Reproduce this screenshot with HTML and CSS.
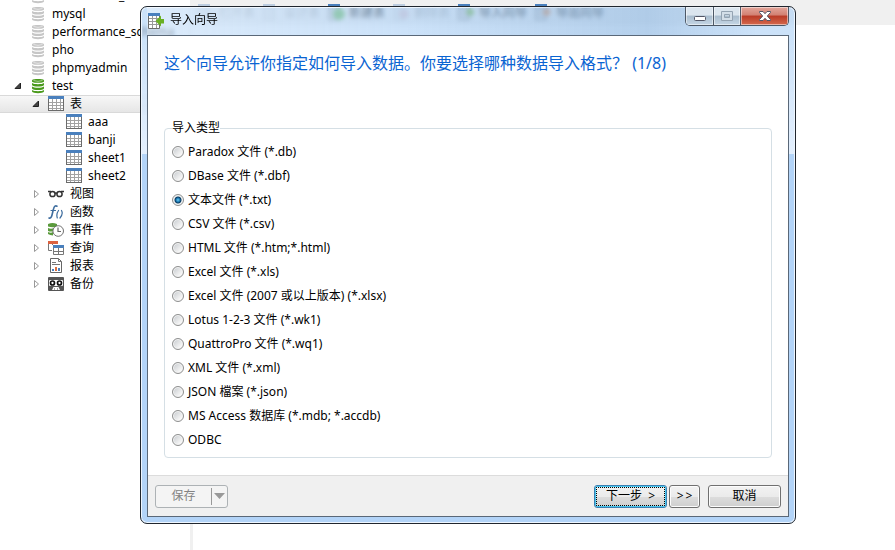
FILE: index.html
```html
<!DOCTYPE html>
<html lang="zh-CN">

<head>
    <meta charset="UTF-8">
    <meta name="viewport" content="width=device-width, initial-scale=1">
    <title>导入向导</title>
    <link rel="stylesheet" href="styles.css">
</head>

<body>
    <!-- shared icons -->
    <svg class="defs" width="0" height="0" aria-hidden="true">
        <symbol id="db" viewBox="0 0 16 16">
            <path d="M2 2.500C2 .6 14 .6 14 2.500V3.500C14 5.300 2 5.300 2 3.500Z" fill="currentColor"/>
            <path d="M2 5C4 6.600 12 6.600 14 5V7C13 9 3 9 2 7ZM2 8.500C4 10.200 12 10.200 14 8.500V10.500C13 12.500 3 12.500 2 10.500ZM2 12C4 13.600 12 13.600 14 12V13.600C13 15.800 3 15.800 2 13.600Z" fill="currentColor"/>
            <path d="M3.500 2.500Q8 4.200 12.500 2.500" fill="none" stroke="#fff" stroke-opacity=".5"/>
        </symbol>
        <symbol id="table" viewBox="0 0 16 16">
            <path d="M0 0H16V15H0Z" fill="#6b6b6b"/>
            <path d="M0 0H16V3H0Z" fill="#4a80bd"/>
            <path d="M1 3H15V14H1Z" fill="#fff"/>
            <path d="M1 6.500H15M1 9.500H15M1 12.500H15M4.500 3V14M8.500 3V14M12.500 3V14" stroke="#a2a2a2" fill="none"/>
        </symbol>
        <symbol id="sheet" viewBox="0 0 17 16">
            <path d="M.5 1V15.500H11.500V1" fill="#fff" stroke="#6b6b6b"/>
            <path d="M1 5.500H11M1 8.500H11M1 11.500H11M4.500 3V15M8.500 3V15" stroke="#999" fill="none"/>
            <path d="M0 0H12V3H0Z" fill="#4a80bd"/>
        </symbol>
        <symbol id="open" viewBox="0 0 8 8">
            <path d="M6.500 1V6.500H1Z" fill="#444" stroke="#222"/>
        </symbol>
        <symbol id="closed" viewBox="0 0 8 8">
            <path d="M2.500 .5L6.500 4L2.500 7.500Z" fill="#fff" stroke="#999"/>
        </symbol>
    </svg>

    <div class="app">
        <nav class="sidebar">
            <ul class="tree">
                <li class="row"><span class="toggle"></span><svg class="icon off"><use href="#db"/></svg>information_schema</li>
                <li class="row"><span class="toggle"></span><svg class="icon off"><use href="#db"/></svg>mysql</li>
                <li class="row"><span class="toggle"></span><svg class="icon off"><use href="#db"/></svg>performance_schema</li>
                <li class="row"><span class="toggle"></span><svg class="icon off"><use href="#db"/></svg>pho</li>
                <li class="row"><span class="toggle"></span><svg class="icon off"><use href="#db"/></svg>phpmyadmin</li>
                <li class="row"><span class="toggle"><svg><use href="#open"/></svg></span><svg class="icon on"><use href="#db"/></svg>test</li>
                <li class="row level2 selected"><span class="toggle"><svg><use href="#open"/></svg></span><svg class="icon"><use href="#table"/></svg>表</li>
                <li class="row level3"><span class="toggle"></span><svg class="icon"><use href="#table"/></svg>aaa</li>
                <li class="row level3"><span class="toggle"></span><svg class="icon"><use href="#table"/></svg>banji</li>
                <li class="row level3"><span class="toggle"></span><svg class="icon"><use href="#table"/></svg>sheet1</li>
                <li class="row level3"><span class="toggle"></span><svg class="icon"><use href="#table"/></svg>sheet2</li>
                <li class="row level2"><span class="toggle"><svg><use href="#closed"/></svg></span>
                    <svg class="icon" viewBox="0 0 16 16"><g fill="none" stroke="#333" stroke-width="1.500"><circle cx="4.500" cy="8" r="2.600"/><circle cx="11.500" cy="8" r="2.600"/><path d="M0 5.500H3M13 5.500H16M7 7.500Q8 6.500 9 7.500"/></g></svg>视图</li>
                <li class="row level2"><span class="toggle"><svg><use href="#closed"/></svg></span>
                    <svg class="icon" viewBox="0 0 16 16"><g fill="none" stroke="#3d6c9e" stroke-linecap="round"><path d="M1 14C4 15 4 10 5.500 5C6.300 2 7.500 1.500 9 2.200" stroke-width="1.600"/><path d="M3 6.500H7.500M10.500 6.500Q8 10 9.300 14M13.500 6.500Q15.500 10 12 14" stroke-width="1.200"/></g></svg>函数</li>
                <li class="row level2"><span class="toggle"><svg><use href="#closed"/></svg></span>
                    <svg class="icon" viewBox="0 0 16 16"><path d="M0 2Q4.500 0 9 2V4.500Q4.500 6 0 4.500ZM0 6Q3 7.300 6 6V9Q3 10 0 9ZM0 10Q3 11.300 5 10V13.500Q2 13 0 12Z" fill="#5a9a3c"/><circle cx="10.200" cy="9" r="5.300" fill="#fff" stroke="#707070"/><path d="M10 5.500V9.500H13" fill="none" stroke="#666" stroke-width="1.200"/></svg>事件</li>
                <li class="row level2"><span class="toggle"><svg><use href="#closed"/></svg></span>
                    <svg class="icon" viewBox="0 0 16 16"><path d="M.5 3V10.500H4M4.500 3V5" fill="none" stroke="#777"/><path d="M0 1H10V4H0Z" fill="#dc6240"/><path d="M5.500 6.500H15.500V14.500H5.500ZM10.500 7V14M6 11.500H15" fill="#fff" stroke="#777"/><path d="M5 5H16V8H5Z" fill="#4a80bd"/></svg>查询</li>
                <li class="row level2"><span class="toggle"><svg><use href="#closed"/></svg></span>
                    <svg class="icon" viewBox="0 0 16 16"><path d="M2.500 .5H10.500L13.500 3.500V14.500H2.500Z" fill="#fff" stroke="#666"/><path d="M10.500 .5V3.500H13.500M4 4.500H8M4 6.500H12" fill="none" stroke="#777"/><path d="M4 11H6V13H4ZM10 10H12V13H10Z" fill="#4a80bd"/><path d="M7 9H9V13H7Z" fill="#dc7040"/></svg>报表</li>
                <li class="row level2"><span class="toggle"><svg><use href="#closed"/></svg></span>
                    <svg class="icon" viewBox="0 0 16 16"><rect y="1" width="16" height="14" rx="1" fill="#555"/><rect x="1" y="4" width="14" height="6" rx="1" fill="#fff"/><circle cx="4.500" cy="7" r="2" fill="#fff" stroke="#111" stroke-width="1.700"/><circle cx="11.500" cy="7" r="2" fill="#fff" stroke="#111" stroke-width="1.700"/><path d="M4 14L5.500 11H10.500L12 14Z" fill="#fff"/><path d="M6 13H7M9 13H10" stroke="#555"/></svg>备份</li>
            </ul>
        </nav>

        <main class="workspace">
            <div class="toolbar">
                <button type="button" class="tool" disabled><svg class="tool-icon"><use href="#sheet"/></svg>打开表</button>
                <button type="button" class="tool" disabled><svg class="tool-icon"><use href="#sheet"/></svg>设计表</button>
                <button type="button" class="tool"><svg class="tool-icon"><use href="#sheet"/><circle cx="11" cy="10" r="6" fill="#5fb54a"/></svg>新建表</button>
                <button type="button" class="tool" disabled><svg class="tool-icon"><use href="#sheet"/><circle cx="11" cy="10" r="5" fill="#c06070"/></svg>删除表</button>
                <button type="button" class="tool wide"><svg class="tool-icon"><use href="#sheet"/><path d="M7.500 8L13 2.500V6H16V10.500H13V13.500Z" fill="#6ab023"/></svg>导入向导</button>
                <button type="button" class="tool wide"><svg class="tool-icon"><use href="#sheet"/><path d="M16 8L11 2.500V6H8V10.500H11V13.500Z" fill="#e07830"/></svg>导出向导</button>
            </div>
        </main>
    </div>

    <form class="dialog" role="dialog" aria-labelledby="dialog-title">
        <header class="titlebar">
            <svg class="title-icon" viewBox="0 0 17 16"><use href="#sheet"/><path d="M7.500 8L13 2.500V6H16V10.500H13V13.500Z" fill="#6ab023"/></svg>
            <span id="dialog-title" class="title">导入向导</span>
            <div class="window-buttons">
                <button type="button" class="win minimize" aria-label="最小化"><svg width="14" height="12"><rect x="1.500" y="6.500" width="11" height="4" rx="1" fill="#fff" stroke="#535666"/></svg></button>
                <button type="button" class="win maximize" aria-label="最大化" disabled><svg width="14" height="12"><path d="M1.500 1.500H12.500V10.500H1.500ZM4.500 4.500H9.500V7.500H4.500Z" fill="#d3dee8" fill-rule="evenodd" stroke="#94a3b2"/></svg></button>
                <button type="button" class="win close" aria-label="关闭"><svg width="14" height="12"><path d="M1.500 1.500H5L7 3.700L9 1.500H12.500V2.500L9.300 6L12.500 9.500V10.500H9L7 8.300L5 10.500H1.500V9.500L4.700 6L1.500 2.500Z" fill="#fff" stroke="#535666"/></svg></button>
            </div>
        </header>

        <div class="client">
            <div class="content">
                <h1>这个向导允许你指定如何导入数据。你要选择哪种数据导入格式？ (1/8)</h1>
                <fieldset class="types">
                    <legend>导入类型</legend>
                    <label><input type="radio" name="type"> Paradox 文件 (*.db)</label>
                    <label><input type="radio" name="type"> DBase 文件 (*.dbf)</label>
                    <label><input type="radio" name="type" checked> 文本文件 (*.txt)</label>
                    <label><input type="radio" name="type"> CSV 文件 (*.csv)</label>
                    <label><input type="radio" name="type"> HTML 文件 (*.htm;*.html)</label>
                    <label><input type="radio" name="type"> Excel 文件 (*.xls)</label>
                    <label><input type="radio" name="type"> Excel 文件 (2007 或以上版本) (*.xlsx)</label>
                    <label><input type="radio" name="type"> Lotus 1-2-3 文件 (*.wk1)</label>
                    <label><input type="radio" name="type"> QuattroPro 文件 (*.wq1)</label>
                    <label><input type="radio" name="type"> XML 文件 (*.xml)</label>
                    <label><input type="radio" name="type"> JSON 檔案 (*.json)</label>
                    <label><input type="radio" name="type"> MS Access 数据库 (*.mdb; *.accdb)</label>
                    <label><input type="radio" name="type"> ODBC</label>
                </fieldset>
            </div>
            <footer class="footer">
                <div class="split">
                    <button type="button" class="split-main" disabled>保存</button>
                    <button type="button" class="split-arrow" aria-label="更多保存选项" disabled><svg width="12" height="7"><path d="M0 0H11L5.500 6Z" fill="#999"/></svg></button>
                </div>
                <div class="actions">
                    <button type="button" class="btn default">下一步 &nbsp;&gt;</button>
                    <button type="button" class="btn small">&gt;&thinsp;&gt;</button>
                    <button type="button" class="btn cancel">取消</button>
                </div>
            </footer>
        </div>
    </form>
</body>

</html>
```

FILE: styles.css
```css
* {
    box-sizing: border-box;
}

body {
    margin: 0;
    background: #fff;
    color: #000;
}

body, button, input {
    font-family: "Noto Sans", "Noto Sans CJK SC", sans-serif;
    font-size: 12px;
    line-height: 18px;
}

button {
    padding: 0;
    color: inherit;
}

.defs {
    position: absolute;
}

/* main window */
.app {
    display: flex;
    height: 100vh;
    overflow: hidden;
}

.sidebar {
    flex: 0 0 190px;
    overflow: hidden;
}

/* list is scrolled part way down */
.tree {
    list-style: none;
    margin: -13px 0 0;
    padding: 0;
}

.row {
    display: flex;
    align-items: center;
    height: 18px;
    padding-left: 10px;
    white-space: nowrap;
}

.level2 {
    padding-left: 28px;
}

.level3 {
    padding-left: 46px;
}

.selected {
    background: linear-gradient(#f8f8f8, #e5e5e5);
    box-shadow: inset 0 1px #d9d9d9, inset 0 -1px #d9d9d9;
}

.toggle {
    display: flex;
    width: 20px;
    padding-left: 4px;
}

.toggle svg {
    width: 8px;
    height: 8px;
}

.icon {
    flex: none;
    width: 16px;
    height: 16px;
    margin-right: 6px;
}

.off {
    color: #c6c6c6;
}

.on {
    color: #4a9a1c;
}

.workspace {
    flex: 1;
    border-left: 3px solid #f0f0f0;
}

.toolbar {
    display: flex;
    gap: 6px;
    height: 25px;
    padding: 4px 5px 0;
    background: #f0f0f0;
}

.tool {
    display: flex;
    align-items: flex-start;
    width: 59px;
    border: 0;
    background: none;
    white-space: nowrap;
}

.tool:disabled {
    opacity: 0.3;
}

.tool.wide {
    width: 71px;
}

.tool-icon {
    flex: none;
    width: 17px;
    height: 16px;
    margin-right: 4px;
}

.tool-icon use {
    width: 17px;
    height: 16px;
}

/* wizard window */
.dialog {
    position: absolute;
    top: 6px;
    right: 99px;
    bottom: 26px;
    left: 140px;
    display: flex;
    flex-direction: column;
    padding: 0 6px 6px;
    border: 1px solid #20262e;
    border-radius: 7px;
    background: linear-gradient(rgba(170, 207, 245, 0.6) 30px, #e3effd 147px, #b3d4f8 147px);
    box-shadow: inset 0 0 0 1px #eef6ff;
    backdrop-filter: blur(2px);
}

.titlebar {
    display: flex;
    align-items: flex-start;
    height: 28px;
    background: linear-gradient(90deg, rgba(255, 255, 255, 0.3), transparent 40%, rgba(125, 165, 205, 0.3) 78%, transparent 95%);
}

.title-icon {
    width: 17px;
    height: 16px;
    margin: 6px 5px 0 1px;
}

.title {
    flex: 1;
    padding-top: 4px;
}

.window-buttons {
    display: flex;
    border: 1px solid #4d5866;
    border-top: 0;
    border-radius: 0 0 5px 5px;
    overflow: hidden;
}

.win {
    display: flex;
    align-items: center;
    justify-content: center;
    width: 28px;
    height: 18px;
    border: 0;
    border-right: 1px solid #4d5866;
    background: linear-gradient(#dbe5ee 45%, #a9bccd 50%, #c5d6e5);
    box-shadow: inset 0 0 0 1px rgba(255, 255, 255, 0.5);
}

.maximize {
    width: 27px;
}

.close {
    width: 47px;
    border-right: 0;
    background: linear-gradient(#e3a79c, #d28072 45%, #b93a26 50%, #d5694d);
}

.client {
    flex: 1;
    display: flex;
    flex-direction: column;
    border: 1px solid #5a6878;
    background: #fff;
}

.content {
    flex: 1;
    padding: 15px 16px 16px;
}

h1 {
    margin: 0 0 44px;
    color: #0a64d2;
    font-size: 16px;
    font-weight: normal;
    line-height: 24px;
}

.types {
    min-width: 0;
    margin: 0;
    padding: 3px 7px 5px;
    border: 1px solid #d5dfe5;
    border-radius: 4px;
}

.types legend {
    padding: 0;
}

.types label {
    display: flex;
    align-items: center;
    gap: 4px;
    height: 24px;
}

.types input {
    appearance: none;
    width: 12px;
    height: 12px;
    margin: 0;
    border: 1px solid #8e8f8f;
    border-radius: 50%;
    background: linear-gradient(135deg, #c4c8cc, #f6f6f6 75%);
    box-shadow: inset 0 0 0 1px #f4f4f4;
}

.types input:checked {
    background: radial-gradient(circle, #6fd0f5 0, #1673ad 2px, #0b3a5e 3px, #e6ecef 4px);
}

.footer {
    display: flex;
    align-items: center;
    justify-content: space-between;
    height: 41px;
    padding: 0 7px;
    border-top: 1px solid #dcdcdc;
    background: #f0f0f0;
}

.split {
    display: flex;
    align-items: center;
    width: 73px;
    height: 23px;
    border: 1px solid #adb2b5;
    border-radius: 3px;
    background: #f4f4f4;
}

.split button {
    border: 0;
    background: none;
    color: #838383;
}

.split-main {
    flex: 1;
}

.split .split-arrow {
    display: flex;
    align-items: center;
    justify-content: center;
    width: 16px;
    height: 17px;
    border-left: 1px solid #999;
}

.actions {
    display: flex;
}

.btn {
    width: 73px;
    height: 23px;
    border: 1px solid #707070;
    border-radius: 3px;
    background: linear-gradient(#f2f2f2, #ebebeb 50%, #dddddd 50%, #cfcfcf);
    box-shadow: inset 0 0 0 1px #fcfcfc;
}

.btn.default {
    border-color: #3c7fb1;
    box-shadow: inset 0 0 0 1px #48c8f0;
    outline: 1px dotted #000;
    outline-offset: -3px;
}

.btn.small {
    width: 31px;
    margin: 0 8px 0 2px;
}
```
